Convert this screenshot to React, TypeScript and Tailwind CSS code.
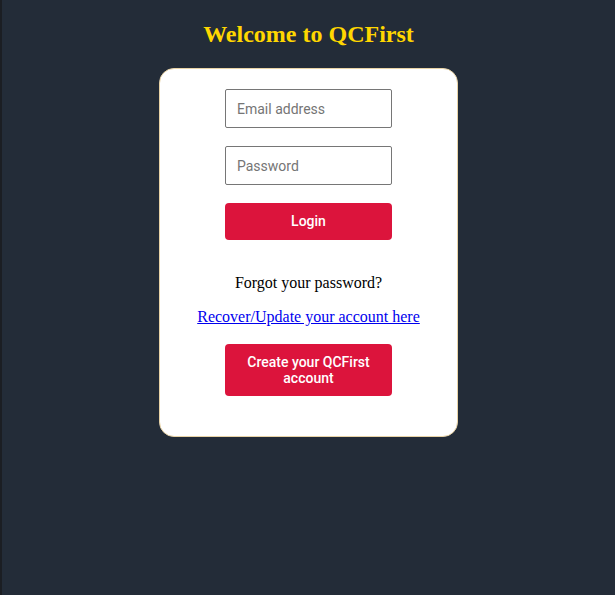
export default function App() {
  return (
    <div className="min-h-[595px] bg-[#232c38] border-l-2 border-[#1b1e23] flex flex-col items-center pt-[20px]">
      <h1 className="text-[24px] leading-[28px] font-bold text-[#ffd700] mb-[20px] [font-family:'Liberation_Serif',serif]">
        Welcome to QCFirst
      </h1>
      <div className="w-[299px] bg-white border border-[#e8d3a6] rounded-[15px] flex flex-col items-center pt-[20px] pb-[40px]">
        <input
          type="email"
          placeholder="Email address"
          className="w-[167px] h-[39px] border border-[#767676] rounded-[2px] px-[11px] text-[14px] placeholder:text-[#757575] outline-none [font-family:Roboto,sans-serif]"
        />
        <input
          type="password"
          placeholder="Password"
          className="w-[167px] h-[39px] mt-[18px] border border-[#767676] rounded-[2px] px-[11px] text-[14px] placeholder:text-[#757575] outline-none [font-family:Roboto,sans-serif]"
        />
        <button className="w-[167px] h-[37px] mt-[18px] bg-[#dc143c] text-white rounded-[4px] text-[14px] font-medium [font-family:Roboto,sans-serif]">
          Login
        </button>
        <p className="mt-[34px] text-[16px] leading-[18px] text-black [font-family:'Liberation_Serif',serif]">
          Forgot your password?
        </p>
        <a href="#" className="mt-[16px] text-[16px] leading-[18px] text-[#0000ee] underline [font-family:'Liberation_Serif',serif]">
          Recover/Update your account here
        </a>
        <button className="w-[167px] h-[52px] mt-[18px] bg-[#dc143c] text-white rounded-[4px] text-[14px] leading-[16px] font-medium px-[16px] [font-family:Roboto,sans-serif]">
          Create your QCFirst account
        </button>
      </div>
    </div>
  );
}
